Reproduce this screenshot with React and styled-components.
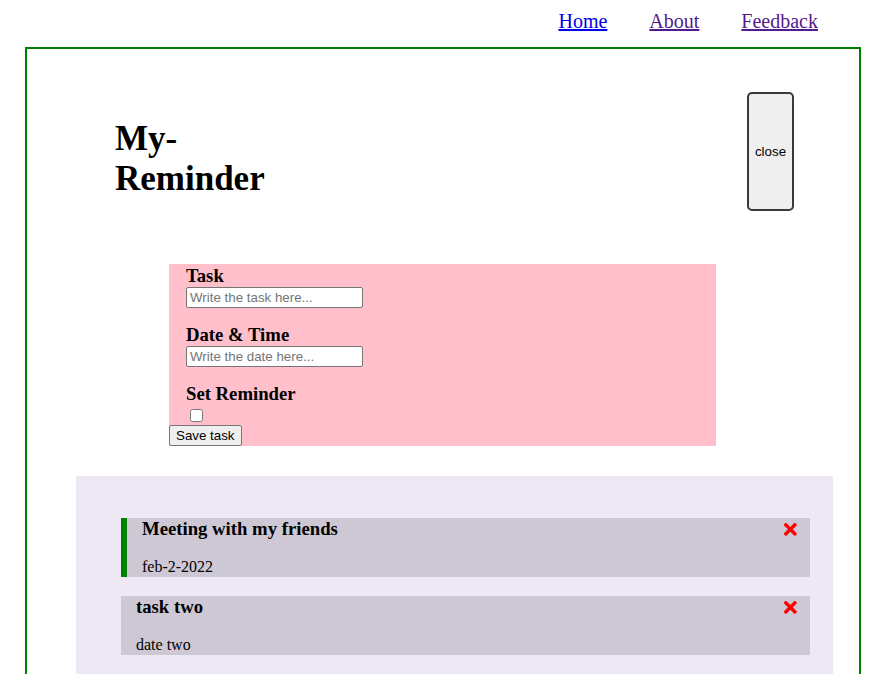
import React from 'react';
import styled, { createGlobalStyle } from 'styled-components';
import { FaTimes } from 'react-icons/fa';

const GlobalStyle = createGlobalStyle`
  body {
    margin: 8px;
    font-family: "Liberation Serif", "Times New Roman", serif;
    font-size: 16px;
    background: #fff;
  }
`;

const tasks = [
  { id: 1, text: 'Meeting with my friends', day: 'feb-2-2022', reminder: true },
  { id: 2, text: 'task two', day: 'date two', reminder: false },
];

function App() {
  return (
    <>
      <GlobalStyle />
      <Nav>
        <NavLink href="#home">Home</NavLink>
        <NavLink href="#about" visited>About</NavLink>
        <NavLink href="#feedback" visited>Feedback</NavLink>
      </Nav>

      <Container>
        <Header>
          <Title>My-Reminder</Title>
          <CloseButton>close</CloseButton>
        </Header>

        <Form onSubmit={e => e.preventDefault()}>
          <Field>
            <Label>Task</Label>
            <TextInput type="text" placeholder="Write the task here..." />
          </Field>
          <Field>
            <Label>Date &amp; Time</Label>
            <TextInput type="text" placeholder="Write the date here..." />
          </Field>
          <Field>
            <Label>Set Reminder</Label>
            <Check type="checkbox" />
          </Field>
          <SaveButton type="submit">Save task</SaveButton>
        </Form>

        <TaskList>
          {tasks.map(task => (
            <Task key={task.id} reminder={task.reminder}>
              <TaskTitle>
                {task.text}
                <FaTimes style={{ color: 'red', cursor: 'pointer' }} />
              </TaskTitle>
              <TaskDay>{task.day}</TaskDay>
            </Task>
          ))}
        </TaskList>
      </Container>
    </>
  );
}

export default App;

const Nav = styled.nav`
  display: flex;
  justify-content: flex-end;
  gap: 42px;
  padding: 2px 44px 0 0;
  margin-bottom: 14px;
`;

const NavLink = styled.a`
  font-size: 20px;
  color: ${props => (props.visited ? '#551a8b' : '#0000ee')};
  text-decoration: underline;
`;

const Container = styled.div`
  box-sizing: border-box;
  width: 836px;
  margin-left: 17px;
  border: 2px solid green;
  padding-bottom: 40px;
`;

const Header = styled.div`
  display: flex;
  justify-content: space-between;
  align-items: flex-start;
  padding: 0 65px 0 88px;
`;

const Title = styled.h1`
  font-size: 35px;
  width: 160px;
  margin: 70px 0 0;
`;

const CloseButton = styled.button`
  width: 47px;
  height: 119px;
  margin-top: 43px;
  padding: 0;
  background: #efefef;
  border: 2px solid #3a3a3a;
  border-radius: 5px;
  font: 13.33px "Liberation Sans", Arial, sans-serif;
  color: #000;
  cursor: pointer;
`;

const Form = styled.form`
  width: 547px;
  margin: 53px 0 0 142px;
  padding: 1px 0 0;
  background: pink;
`;

const Field = styled.div`
  margin: 0 0 16px 17px;

  &:last-of-type {
    margin-bottom: 0;
  }
`;

const Label = styled.h3`
  font-size: 18.72px;
  line-height: 21px;
  margin: 0;
`;

const TextInput = styled.input`
  display: block;
  box-sizing: border-box;
  width: 177px;
  height: 21px;
  margin-top: 1px;
  padding: 1px 3px;
  border: 1px solid #767676;
  border-radius: 2px;
  font: 13.33px "Liberation Sans", Arial, sans-serif;
  background: #fff;

  &::placeholder {
    color: #757575;
  }
`;

const Check = styled.input`
  display: block;
  width: 13px;
  height: 13px;
  margin: 5px 0 0 4px;
`;

const SaveButton = styled.button`
  display: block;
  margin-top: 3px;
  height: 21px;
  padding: 1px 6px;
  background: #efefef;
  border: 1px solid #767676;
  border-radius: 2px;
  font: 13.33px "Liberation Sans", Arial, sans-serif;
  color: #000;
`;

const TaskList = styled.div`
  width: 757px;
  box-sizing: border-box;
  margin: 30px 0 0 49px;
  padding: 42px 23px 40px 45px;
  background: #eee8f4;
`;

const Task = styled.div`
  background: #cec8d4;
  padding: 0 10px 1px 15px;
  border-left: ${props => (props.reminder ? '6px solid green' : 'none')};
  cursor: pointer;

  & + & {
    margin-top: 19px;
  }
`;

const TaskTitle = styled.h3`
  display: flex;
  align-items: center;
  justify-content: space-between;
  font-size: 18.72px;
  margin: 0 0 18px;
`;

const TaskDay = styled.p`
  margin: 0;
`;
